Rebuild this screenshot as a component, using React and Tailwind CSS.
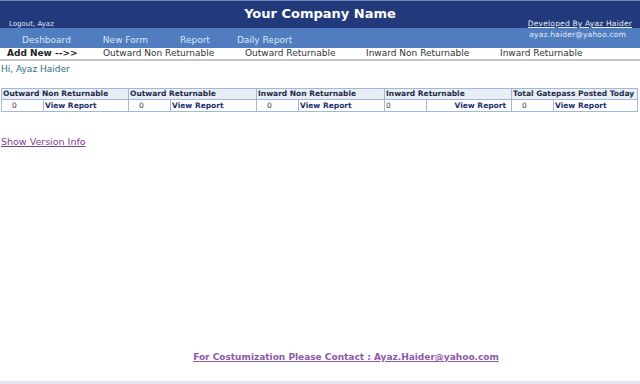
import React from "react";

const font = { fontFamily: '"DejaVu Sans", Verdana, sans-serif' };

const groups = [
  { title: "Outward Non Returnable" },
  { title: "Outward Returnable" },
  { title: "Inward Non Returnable" },
  { title: "Inward Returnable", alt: true },
  { title: "Total Gatepass Posted Today" },
];

export default function App() {
  return (
    <div
      className="flex h-[384px] w-[640px] flex-col bg-white font-['DejaVu_Sans',Verdana,sans-serif]"
      style={font}
    >
      <header className="relative h-[28px] shrink-0 border-t border-[#6f86b8] bg-[#223a7c]">
        <h1 className="pt-[3px] text-center text-[13px] font-bold leading-[20px] text-white">
          Your Company Name
        </h1>
        <span className="absolute left-[9px] top-[18px] text-[7px] text-[#dfe7f5]">
          Logout, Ayaz
        </span>
        <span className="absolute right-[8px] top-[17px] text-[7.5px] tracking-[0.2px] text-[#e7edf8] underline">
          Developed By Ayaz Haider
        </span>
      </header>
      <nav className="relative flex h-[20px] shrink-0 items-end bg-[#4f7dbf] pb-[1px] text-[9px] text-[#dbe6f6]">
        <span className="ml-[22px]">Deshboard</span>
        <span className="ml-[32px]">New Form</span>
        <span className="ml-[32px]">Report</span>
        <span className="ml-[27px]">Daily Report</span>
        <span className="absolute right-[14px] top-[1px] text-[7.5px] tracking-[0.2px] text-[#e7edf8]">
          ayaz.haider@yahoo.com
        </span>
      </nav>
      <div className="flex h-[13px] shrink-0 items-center border-b-2 border-[#c4c4c4] text-[9px] text-[#333]">
        <span className="ml-[7px] w-[96px] font-bold text-[#222]">Add New --&gt;&gt;</span>
        <span className="w-[142px]">Outward Non Returnable</span>
        <span className="w-[121px]">Outward Returnable</span>
        <span className="w-[134px]">Inward Non Returnable</span>
        <span>Inward Returnable</span>
      </div>
      <p className="ml-[1px] mt-[2px] text-[9px] leading-[12px] text-[#2d6c86]">Hi, Ayaz Haider</p>

      <table className="ml-[1px] mt-[13px] w-[637px] table-fixed border-collapse border border-[#9fb8dc] text-[7.5px]">
        <colgroup>
          <col className="w-[42px]" />
          <col className="w-[85px]" />
          <col className="w-[42px]" />
          <col className="w-[86px]" />
          <col className="w-[42px]" />
          <col className="w-[86px]" />
          <col className="w-[42px]" />
          <col className="w-[85px]" />
          <col className="w-[42px]" />
          <col />
        </colgroup>
        <thead>
          <tr className="h-[11px] bg-[#e9eef6]">
            {groups.map((g) => (
              <th
                key={g.title}
                colSpan={2}
                className="border border-[#9fb8dc] px-[1px] text-left font-bold leading-[10px] text-[#1d2a44]"
              >
                {g.title}
              </th>
            ))}
          </tr>
        </thead>
        <tbody>
          <tr className="h-[12px]">
            {groups.map((g) =>
              g.alt ? (
                <React.Fragment key={g.title}>
                  <td className="border border-[#9fb8dc] px-[1px] leading-[10px] text-[#333]">0</td>
                  <td className="border border-[#9fb8dc] pr-[5px] text-right font-bold leading-[10px] text-[#1c2d6e]">
                    View Report
                  </td>
                </React.Fragment>
              ) : (
                <React.Fragment key={g.title}>
                  <td className="border border-[#9fb8dc] pl-[10px] leading-[10px] text-[#333]">0</td>
                  <td className="border border-[#9fb8dc] px-[1px] font-bold leading-[10px] text-[#1c2d6e]">
                    View Report
                  </td>
                </React.Fragment>
              )
            )}
          </tr>
        </tbody>
      </table>

      <a href="#" className="ml-[1px] mt-[24px] w-fit text-[9.5px] leading-[12px] text-[#7a3e8e] underline">
        Show Version Info
      </a>

      <div className="flex-1" />
      <div className="flex h-[30px] shrink-0 justify-center pl-[52px]">
        <a href="#" className="text-[9px] font-bold leading-[12px] text-[#8a5aa8] underline">
          For Costumization Please Contact : Ayaz.Haider@yahoo.com
        </a>
      </div>
      <div className="h-[3px] shrink-0 bg-[#e6e4ef]" />
    </div>
  );
}
